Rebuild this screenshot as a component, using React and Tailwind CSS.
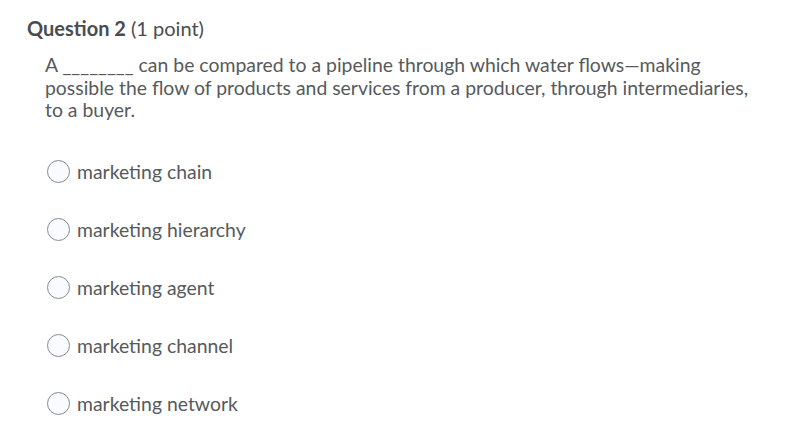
import React from "react";

const options = [
  "marketing chain",
  "marketing hierarchy",
  "marketing agent",
  "marketing channel",
  "marketing network",
];

export default function App() {
  return (
    <div
      className="w-[798px] h-[442px] bg-white overflow-hidden pl-[27px] pt-[14px]"
      style={{ fontFamily: "Lato, 'Noto Sans', sans-serif" }}
    >
      <h2 className="text-[20px] leading-[28px] text-[#494c4e]">
        <span className="font-bold">Question 2</span>
        <span> (1 point)</span>
      </h2>
      <p className="mt-[12px] ml-[18px] w-[712px] text-[19.4px] leading-[22.5px] text-[#565a5c]">
        A ________ can be compared to a pipeline through which water flows—making possible the flow of products and services from a producer, through intermediaries, to a buyer.
      </p>
      <div className="mt-[38px] ml-[20px] flex flex-col gap-[34px]">
        {options.map((o) => (
          <label key={o} className="flex items-center h-[24px] text-[19.4px] text-[#565a5c]">
            <span className="w-[23px] h-[23px] rounded-full border border-[#868c8f] bg-[#f9fbff] shrink-0" />
            <span className="ml-[7px]">{o}</span>
          </label>
        ))}
      </div>
    </div>
  );
}
